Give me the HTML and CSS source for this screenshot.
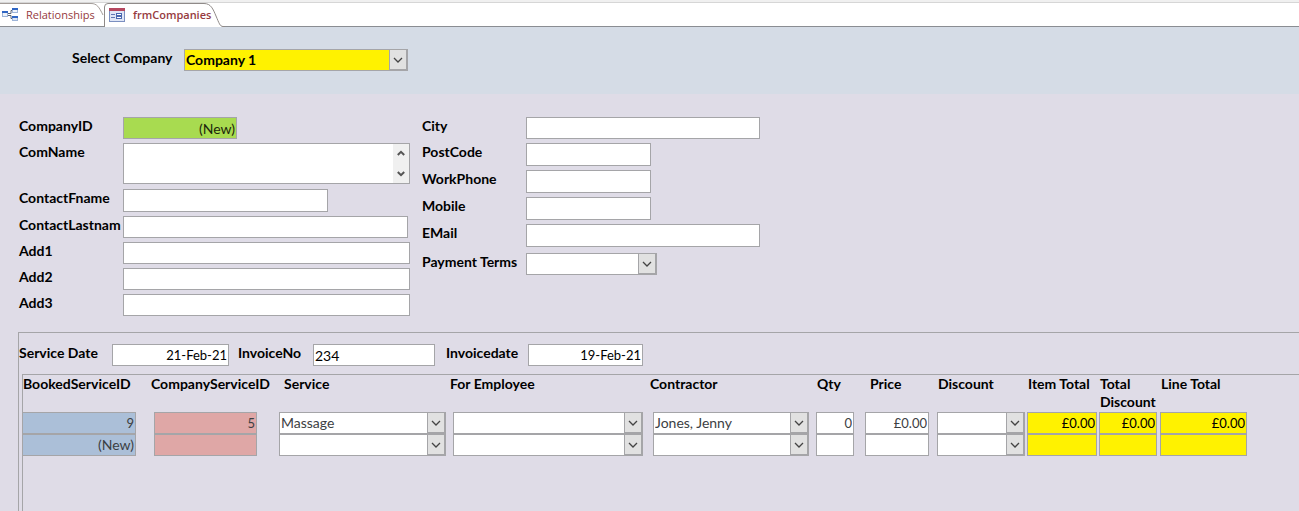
FILE: index.html
```html
<!DOCTYPE html>
<html lang="en">
<head>
<meta charset="utf-8">
<meta name="viewport" content="width=device-width, initial-scale=1.0">
<title>frmCompanies</title>
<link rel="stylesheet" href="styles.css">
</head>
<body>

<svg class="defs" aria-hidden="true">
  <symbol id="chevron" viewBox="0 0 10 6">
    <path d="M1 1 L5 5 L9 1" fill="none" stroke="#444" stroke-width="1.3"/>
  </symbol>
  <symbol id="scroll-up" viewBox="0 0 8 6">
    <path d="M0.8 5 L4 1.8 L7.2 5" fill="none" stroke="#555" stroke-width="2"/>
  </symbol>
  <symbol id="scroll-down" viewBox="0 0 8 6">
    <path d="M0.8 1 L4 4.2 L7.2 1" fill="none" stroke="#555" stroke-width="2"/>
  </symbol>
</svg>

<nav class="tabs">
  <button class="tab tab-rel" type="button">
    <svg class="tab-shape" viewBox="0 0 105 24">
      <path d="M0 .5 H91 C97 .5 99 4 103 12 V24 H0 Z" fill="#fff" stroke="none"/>
      <path d="M0 .5 H91 C97 .5 99 4 103 12" fill="none" stroke="#a39c98"/>
      <path d="M0 23.5 H105" stroke="#8a8d92"/>
    </svg>
    <svg class="icon" viewBox="0 0 16 16">
      <path d="M6 6.5 H9 V3.5 H11 M6 8.5 H9 V11.5 H11" fill="none" stroke="#5a6372"/>
      <rect x=".5" y="5.5" width="5" height="4" fill="#eef3fb" stroke="#9db4d8"/>
      <rect x="0" y="4" width="6" height="2" fill="#2f66c4"/>
      <rect x="10.5" y="2.5" width="5" height="3" fill="#eef3fb" stroke="#9db4d8"/>
      <rect x="10" y="1" width="6" height="2" fill="#2f66c4"/>
      <rect x="10.5" y="10.5" width="5" height="3" fill="#dce6f6" stroke="#9db4d8"/>
      <rect x="10" y="9" width="6" height="2" fill="#2f66c4"/>
    </svg>
    <span>Relationships</span>
  </button>
  <button class="tab tab-frm" type="button">
    <svg class="tab-shape" viewBox="0 0 121 24">
      <path d="M.5 24 V4 Q.5 .5 4 .5 H100 C107 .5 109 6 112 13 C115 20 116 23.5 119 23.5 V24 Z" fill="#fff"/>
      <path d="M.5 24 V4 Q.5 .5 4 .5 H100 C107 .5 109 6 112 13 C115 20 116 23.5 119 23.5 H121" fill="none" stroke="#8f8a88"/>
    </svg>
    <svg class="icon" viewBox="0 0 16 16">
      <rect x=".5" y="1.5" width="15" height="13" fill="#dfe6f6" stroke="#7b8fc0"/>
      <rect x="0" y="1" width="16" height="3" fill="#b5475f"/>
      <path d="M2 7.5 H6 M2 10.5 H6" stroke="#6078b4"/>
      <rect x="7.5" y="6.5" width="5" height="2" fill="#fff" stroke="#4a68b0"/>
      <rect x="7.5" y="9.5" width="5" height="2" fill="#fff" stroke="#4a68b0"/>
    </svg>
    <span>frmCompanies</span>
  </button>
</nav>

<header class="form-header">
  <label for="select-company">Select Company</label>
  <span class="combo w-select">
    <select id="select-company" class="yellow"><option>Company 1</option></select>
    <span class="combo-btn"><svg><use href="#chevron"/></svg></span>
  </span>
</header>

<main class="detail">
  <form class="company">
    <div class="fields">
      <label for="company-id">CompanyID</label>
      <input id="company-id" class="box w-id green new" type="text" value="(New)">
      <label for="com-name">ComName</label>
      <span class="memo">
        <textarea id="com-name" class="box"></textarea>
        <span class="scroll">
          <svg><use href="#scroll-up"/></svg>
          <svg><use href="#scroll-down"/></svg>
        </span>
      </span>
      <label for="fname">ContactFname</label>
      <input id="fname" class="box tall w-fname" type="text">
      <label for="lname">ContactLastnam</label>
      <input id="lname" class="box w-lname" type="text">
      <label for="add1">Add1</label>
      <input id="add1" class="box" type="text">
      <label for="add2">Add2</label>
      <input id="add2" class="box" type="text">
      <label for="add3">Add3</label>
      <input id="add3" class="box" type="text">
    </div>
    <div class="fields contact">
      <label for="city">City</label>
      <input id="city" class="box" type="text">
      <label for="postcode">PostCode</label>
      <input id="postcode" class="box tall w-short" type="text">
      <label for="workphone">WorkPhone</label>
      <input id="workphone" class="box tall w-short" type="text">
      <label for="mobile">Mobile</label>
      <input id="mobile" class="box tall w-short" type="text">
      <label for="email">EMail</label>
      <input id="email" class="box tall" type="text">
      <label for="terms" class="terms">Payment Terms</label>
      <span class="combo terms w-terms">
        <select id="terms"><option></option></select>
        <span class="combo-btn"><svg><use href="#chevron"/></svg></span>
      </span>
    </div>
  </form>

  <section class="subform">
    <div class="invoice">
      <label for="service-date" class="l-date">Service Date</label>
      <input id="service-date" class="box num w-date" type="text" value="21-Feb-21">
      <label for="invoice-no" class="l-no">InvoiceNo</label>
      <input id="invoice-no" class="box w-no" type="text" value="234">
      <label for="invoice-date" class="l-inv">Invoicedate</label>
      <input id="invoice-date" class="box num w-inv" type="text" value="19-Feb-21">
    </div>

    <div class="lines">
      <table>
        <colgroup>
          <col class="c-booked"><col class="c-companyservice"><col class="c-service">
          <col class="c-employee"><col class="c-contractor"><col class="c-qty">
          <col class="c-price"><col class="c-discount"><col class="c-item">
          <col class="c-totaldisc"><col class="c-line">
        </colgroup>
        <thead>
          <tr>
            <th class="booked">BookedServiceID</th>
            <th class="companyservice">CompanyServiceID</th>
            <th class="service">Service</th>
            <th class="employee">For Employee</th>
            <th class="contractor">Contractor</th>
            <th class="qty">Qty</th>
            <th class="price">Price</th>
            <th class="discount">Discount</th>
            <th class="item">Item Total</th>
            <th class="totaldisc">Total Discount</th>
            <th class="line">Line Total</th>
          </tr>
        </thead>
        <tbody>
          <tr>
            <td class="booked"><input class="box blue num" type="text" value="9" aria-label="BookedServiceID"></td>
            <td class="companyservice"><input class="box pink num" type="text" value="5" aria-label="CompanyServiceID"></td>
            <td class="service"><span class="combo"><select aria-label="Service"><option>Massage</option></select><span class="combo-btn"><svg><use href="#chevron"/></svg></span></span></td>
            <td class="employee"><span class="combo"><select aria-label="For Employee"><option></option></select><span class="combo-btn"><svg><use href="#chevron"/></svg></span></span></td>
            <td class="contractor"><span class="combo"><select aria-label="Contractor"><option>Jones, Jenny</option></select><span class="combo-btn"><svg><use href="#chevron"/></svg></span></span></td>
            <td class="qty"><input class="box num" type="text" value="0" aria-label="Qty"></td>
            <td class="price"><input class="box num" type="text" value="£0.00" aria-label="Price"></td>
            <td class="discount"><span class="combo"><select aria-label="Discount"><option></option></select><span class="combo-btn"><svg><use href="#chevron"/></svg></span></span></td>
            <td class="item"><input class="box yellow num" type="text" value="£0.00" aria-label="Item Total"></td>
            <td class="totaldisc"><input class="box yellow num" type="text" value="£0.00" aria-label="Total Discount"></td>
            <td class="line"><input class="box yellow num" type="text" value="£0.00" aria-label="Line Total"></td>
          </tr>
          <tr>
            <td class="booked"><input class="box blue new" type="text" value="(New)" aria-label="BookedServiceID"></td>
            <td class="companyservice"><input class="box pink num" type="text" aria-label="CompanyServiceID"></td>
            <td class="service"><span class="combo"><select aria-label="Service"><option></option></select><span class="combo-btn"><svg><use href="#chevron"/></svg></span></span></td>
            <td class="employee"><span class="combo"><select aria-label="For Employee"><option></option></select><span class="combo-btn"><svg><use href="#chevron"/></svg></span></span></td>
            <td class="contractor"><span class="combo"><select aria-label="Contractor"><option></option></select><span class="combo-btn"><svg><use href="#chevron"/></svg></span></span></td>
            <td class="qty"><input class="box num" type="text" aria-label="Qty"></td>
            <td class="price"><input class="box num" type="text" aria-label="Price"></td>
            <td class="discount"><span class="combo"><select aria-label="Discount"><option></option></select><span class="combo-btn"><svg><use href="#chevron"/></svg></span></span></td>
            <td class="item"><input class="box yellow num" type="text" aria-label="Item Total"></td>
            <td class="totaldisc"><input class="box yellow num" type="text" aria-label="Total Discount"></td>
            <td class="line"><input class="box yellow num" type="text" aria-label="Line Total"></td>
          </tr>
        </tbody>
      </table>
    </div>
  </section>
</main>

</body>
</html>
```

FILE: styles.css
```css
* { box-sizing: border-box; }
body {
  margin: 0;
  min-height: 100vh;
  display: flex;
  flex-direction: column;
  background: #dfdce7;
  color: #000;
  font-family: Lato, "Open Sans", sans-serif;
  font-size: 14px;
  line-height: 18px;
}
.defs { display: none; }
label, th { font-weight: bold; white-space: nowrap; }
input, select, textarea { font: inherit; color: inherit; border-radius: 0; margin: 0; }

/* document tabs */
.tabs {
  display: flex;
  height: 27px;
  padding-top: 3px;
  background: linear-gradient(#f0f0f0 2px, #d6d6d6 2px, #d6d6d6 3px, #fff 3px, #fff 26px, #8a8d92 26px);
}
.tab {
  position: relative;
  display: flex;
  align-items: center;
  gap: 8px;
  height: 24px;
  padding: 0;
  border: 0;
  background: none;
  color: #963a40;
  font: 11px/16px "Open Sans", sans-serif;
  white-space: nowrap;
}
.tab-rel { width: 104px; padding-left: 2px; }
.tab-frm { width: 121px; padding-left: 5px; font-weight: 600; }
.tab-shape { position: absolute; left: 0; top: 0; height: 24px; }
.tab-rel .tab-shape { width: 105px; }
.tab-frm .tab-shape { width: 121px; }
.tab .icon { position: relative; width: 16px; height: 16px; }
.tab span { position: relative; }

.form-header {
  display: flex;
  align-items: flex-start;
  height: 67px;
  padding: 22px 0 0 72px;
  background: #d5dce6;
}
.form-header label { width: 112px; }
.form-header select { font-weight: bold; }

/* text boxes and combo boxes */
.box {
  display: block;
  width: 100%;
  height: 22px;
  padding: 0 1px;
  border: 1px solid #a5a5a8;
  background: #fff;
  outline: none;
}
.tall { height: 23px; }
.num { text-align: right; font-size: 13px; }
.new { text-align: right; }
.combo { position: relative; display: block; width: 100%; height: 22px; }
.combo select {
  appearance: none;
  display: block;
  width: 100%;
  height: 22px;
  padding: 0 20px 0 1px;
  border: 1px solid #a5a5a8;
  border-right-width: 2px;
  background: #fff;
  outline: none;
}
.combo-btn {
  position: absolute;
  top: 1px;
  right: 2px;
  bottom: 1px;
  width: 17px;
  display: flex;
  align-items: center;
  justify-content: center;
  border: 1px solid #a5a5a8;
  border-width: 0 0 1px 1px;
  background: #e1e1e1;
  pointer-events: none;
}
.combo-btn svg { width: 10px; height: 6px; }
.box.green { background: #a8db50; color: #1c260c; }
.box.blue { background: #abbfd8; }
.box.pink { background: #dfa7a6; }
.box.yellow, .combo select.yellow { background: #fff200; color: #000; }

/* company details */
.detail { flex: 1; display: flex; flex-direction: column; padding: 23px 0 0 18px; }
.company { display: flex; align-items: flex-start; gap: 12px; padding-left: 1px; margin-bottom: 16px; }
.fields {
  display: grid;
  grid-template-columns: 104px 287px;
  row-gap: 4px;
  align-items: start;
}
.contact { grid-template-columns: 104px 234px; }
.memo { position: relative; display: block; height: 42px; }
.memo .box { height: 41px; resize: none; overflow: hidden; }
.scroll {
  position: absolute;
  top: 1px;
  right: 1px;
  width: 16px;
  height: 39px;
  padding: 6px 4px;
  display: flex;
  flex-direction: column;
  justify-content: space-between;
  background: #f0f0f0;
}
.scroll svg { width: 8px; height: 6px; }
.terms { margin-top: 2px; }

.w-select { width: 224px; }
.w-id { width: 114px; }
.w-fname { width: 205px; }
.w-lname { width: 285px; }
.w-short { width: 125px; }
.w-terms { width: 131px; }
.w-date { width: 117px; }
.w-no { width: 122px; }
.w-inv { width: 115px; }

/* services subform */
.subform {
  flex: 1;
  display: flex;
  flex-direction: column;
  padding: 11px 0 0 0;
  border-top: 1px solid #a5a5a8;
  border-left: 1px solid #a5a5a8;
}
.invoice { display: flex; align-items: flex-start; margin-bottom: 8px; }
.l-date { width: 93px; }
.l-no { width: 84px; padding-left: 9px; }
.l-inv { width: 93px; padding-left: 11px; }
.lines {
  flex: 1;
  margin-left: 3px;
  border-top: 1px solid #a5a5a8;
  border-left: 1px solid #a5a5a8;
}
table { table-layout: fixed; width: 1224px; border-collapse: collapse; }
th { height: 37px; padding: 0; text-align: left; vertical-align: top; }
td { padding: 0; color: #3c4043; }
td .box, td .combo select { padding-bottom: 1px; }
.c-booked { width: 128px; }
.c-companyservice { width: 128px; }
.c-service { width: 171px; }
.c-employee { width: 200px; }
.c-contractor { width: 166px; }
.c-qty { width: 49px; }
.c-price { width: 72px; }
.c-discount { width: 90px; }
.c-item { width: 72px; }
.c-totaldisc { width: 61px; }
.c-line { width: 87px; }
td.booked { padding-right: 15px; }
td.booked .box { border-left: 0; }
td.companyservice { padding: 0 22px 0 3px; }
td.service { padding-right: 4px; }
td.employee { padding: 0 7px 0 3px; }
td.contractor { padding: 0 7px 0 3px; }
td.qty { padding-right: 11px; }
td.price { padding-right: 8px; }
td.discount { padding-right: 2px; }
td.item { padding-right: 2px; }
td.totaldisc { padding-right: 3px; }
th.service, th.price { padding-left: 5px; }
th.qty, th.discount, th.item, th.totaldisc, th.line { padding-left: 1px; }
th.totaldisc { white-space: normal; }
```
